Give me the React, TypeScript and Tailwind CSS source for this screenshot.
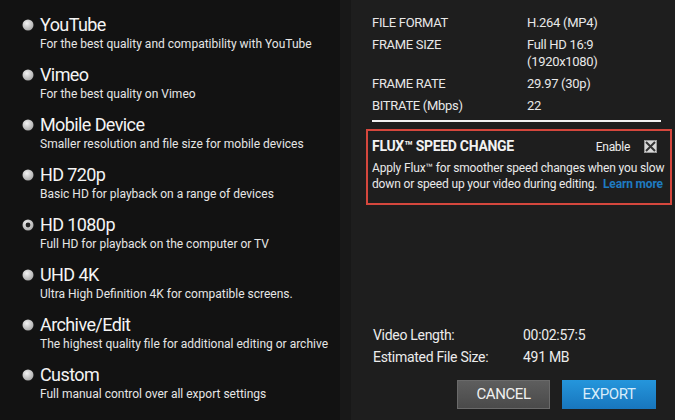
import React from "react";

const presets = [
  { title: "YouTube", desc: "For the best quality and compatibility with YouTube" },
  { title: "Vimeo", desc: "For the best quality on Vimeo" },
  { title: "Mobile Device", desc: "Smaller resolution and file size for mobile devices" },
  { title: "HD 720p", desc: "Basic HD for playback on a range of devices" },
  { title: "HD 1080p", desc: "Full HD for playback on the computer or TV", selected: true },
  { title: "UHD 4K", desc: "Ultra High Definition 4K for compatible screens." },
  { title: "Archive/Edit", desc: "The highest quality file for additional editing or archive" },
  { title: "Custom", desc: "Full manual control over all export settings" },
];

function Radio({ selected }: { selected?: boolean }) {
  return (
    <svg width="12" height="12" viewBox="0 0 12 12" className="shrink-0">
      <defs>
        <radialGradient id="rg" cx="40%" cy="35%" r="70%">
          <stop offset="0%" stopColor="#f2f2f2" />
          <stop offset="100%" stopColor="#a8a8a8" />
        </radialGradient>
      </defs>
      <circle cx="6" cy="6" r="5.5" fill="url(#rg)" />
      {selected && <circle cx="6" cy="6" r="2.4" fill="#222" />}
    </svg>
  );
}

export default function App() {
  const font = { fontFamily: "Roboto, 'Liberation Sans', sans-serif" };
  return (
    <div className="flex w-[675px] h-[420px] overflow-hidden text-white" style={font}>
      <div className="w-[340px] bg-[#121212] pl-[22px] pt-[12px] flex flex-col">
        {presets.map((p) => (
          <div key={p.title} className="h-[50px] flex flex-col">
            <div className="flex items-center gap-[6px] h-[25px]">
              <Radio selected={p.selected} />
              <span className="text-[18px] leading-[25px] tracking-[-0.6px] text-[#f4f4f4]">{p.title}</span>
            </div>
            <div className="pl-[18px] text-[12px] leading-[15px] tracking-[0px] text-[#e6e6e6]">{p.desc}</div>
          </div>
        ))}
      </div>
      <div className="w-[11px] bg-[#181818]" />
      <div className="flex-1 bg-[#1e1e1e] pl-[15px] pr-[3px] pt-[14px] flex flex-col">
        <div className="pl-[6px] pr-[11px] text-[13px] leading-[17px] tracking-[-0.3px] text-[#e8e8e8]">
          <div className="grid grid-cols-[155px_1fr] gap-y-[5px]">
            <div>FILE FORMAT</div>
            <div>H.264 (MP4)</div>
            <div>FRAME SIZE</div>
            <div>Full HD 16:9<br />(1920x1080)</div>
            <div>FRAME RATE</div>
            <div>29.97 (30p)</div>
            <div>BITRATE (Mbps)</div>
            <div>22</div>
          </div>
          <div className="mt-[6px] h-[2px] bg-[#f2f2f2]" />
        </div>
        <div className="mt-[7px] border-2 border-[#d5473d] h-[76px] px-[4px] pt-[5px]">
          <div className="flex items-center">
            <span className="font-bold text-[14px] tracking-[-0.3px] text-[#f2f2f2]">FLUX™ SPEED CHANGE</span>
            <span className="ml-auto text-[12px] tracking-[-0.3px] text-[#eee]">Enable</span>
            <svg width="13" height="13" viewBox="0 0 13 13" className="ml-[14px] mr-[9px]">
              <rect x="0.5" y="0.5" width="12" height="12" fill="#d8d8d8" stroke="#999" />
              <path d="M2 2 L11 11 M11 2 L2 11" stroke="#333" strokeWidth="2" />
            </svg>
          </div>
          <div className="mt-[3px] text-[12px] leading-[16px] tracking-[-0.15px] text-[#eaeaea] whitespace-nowrap">
            <div>Apply Flux™ for smoother speed changes when you slow</div>
            <div>
              down or speed up your video during editing.&nbsp;&nbsp;
              <span className="font-bold text-[#1f7bc1]">Learn more</span>
            </div>
          </div>
        </div>
        <div className="mt-auto pl-[7px] text-[14px] leading-[22px] tracking-[-0.3px] text-[#ececec]">
          <div className="grid grid-cols-[150px_1fr]">
            <div>Video Length:</div>
            <div>00:02:57:5</div>
            <div>Estimated File Size:</div>
            <div>491 MB</div>
          </div>
        </div>
        <div className="flex justify-end gap-[12px] mt-[12px] mb-[11px] pr-[16px]">
          <button className="w-[93px] h-[29px] bg-gradient-to-b from-[#5e5e5e] to-[#4a4a4a] border border-[#6a6a6a] text-[15px] tracking-[-0.4px] text-[#f0f0f0]">CANCEL</button>
          <button className="w-[94px] h-[29px] bg-gradient-to-b from-[#2596dc] to-[#1876bd] text-[15px] tracking-[-0.4px] text-[#d8ecfa]">EXPORT</button>
        </div>
      </div>
    </div>
  );
}
